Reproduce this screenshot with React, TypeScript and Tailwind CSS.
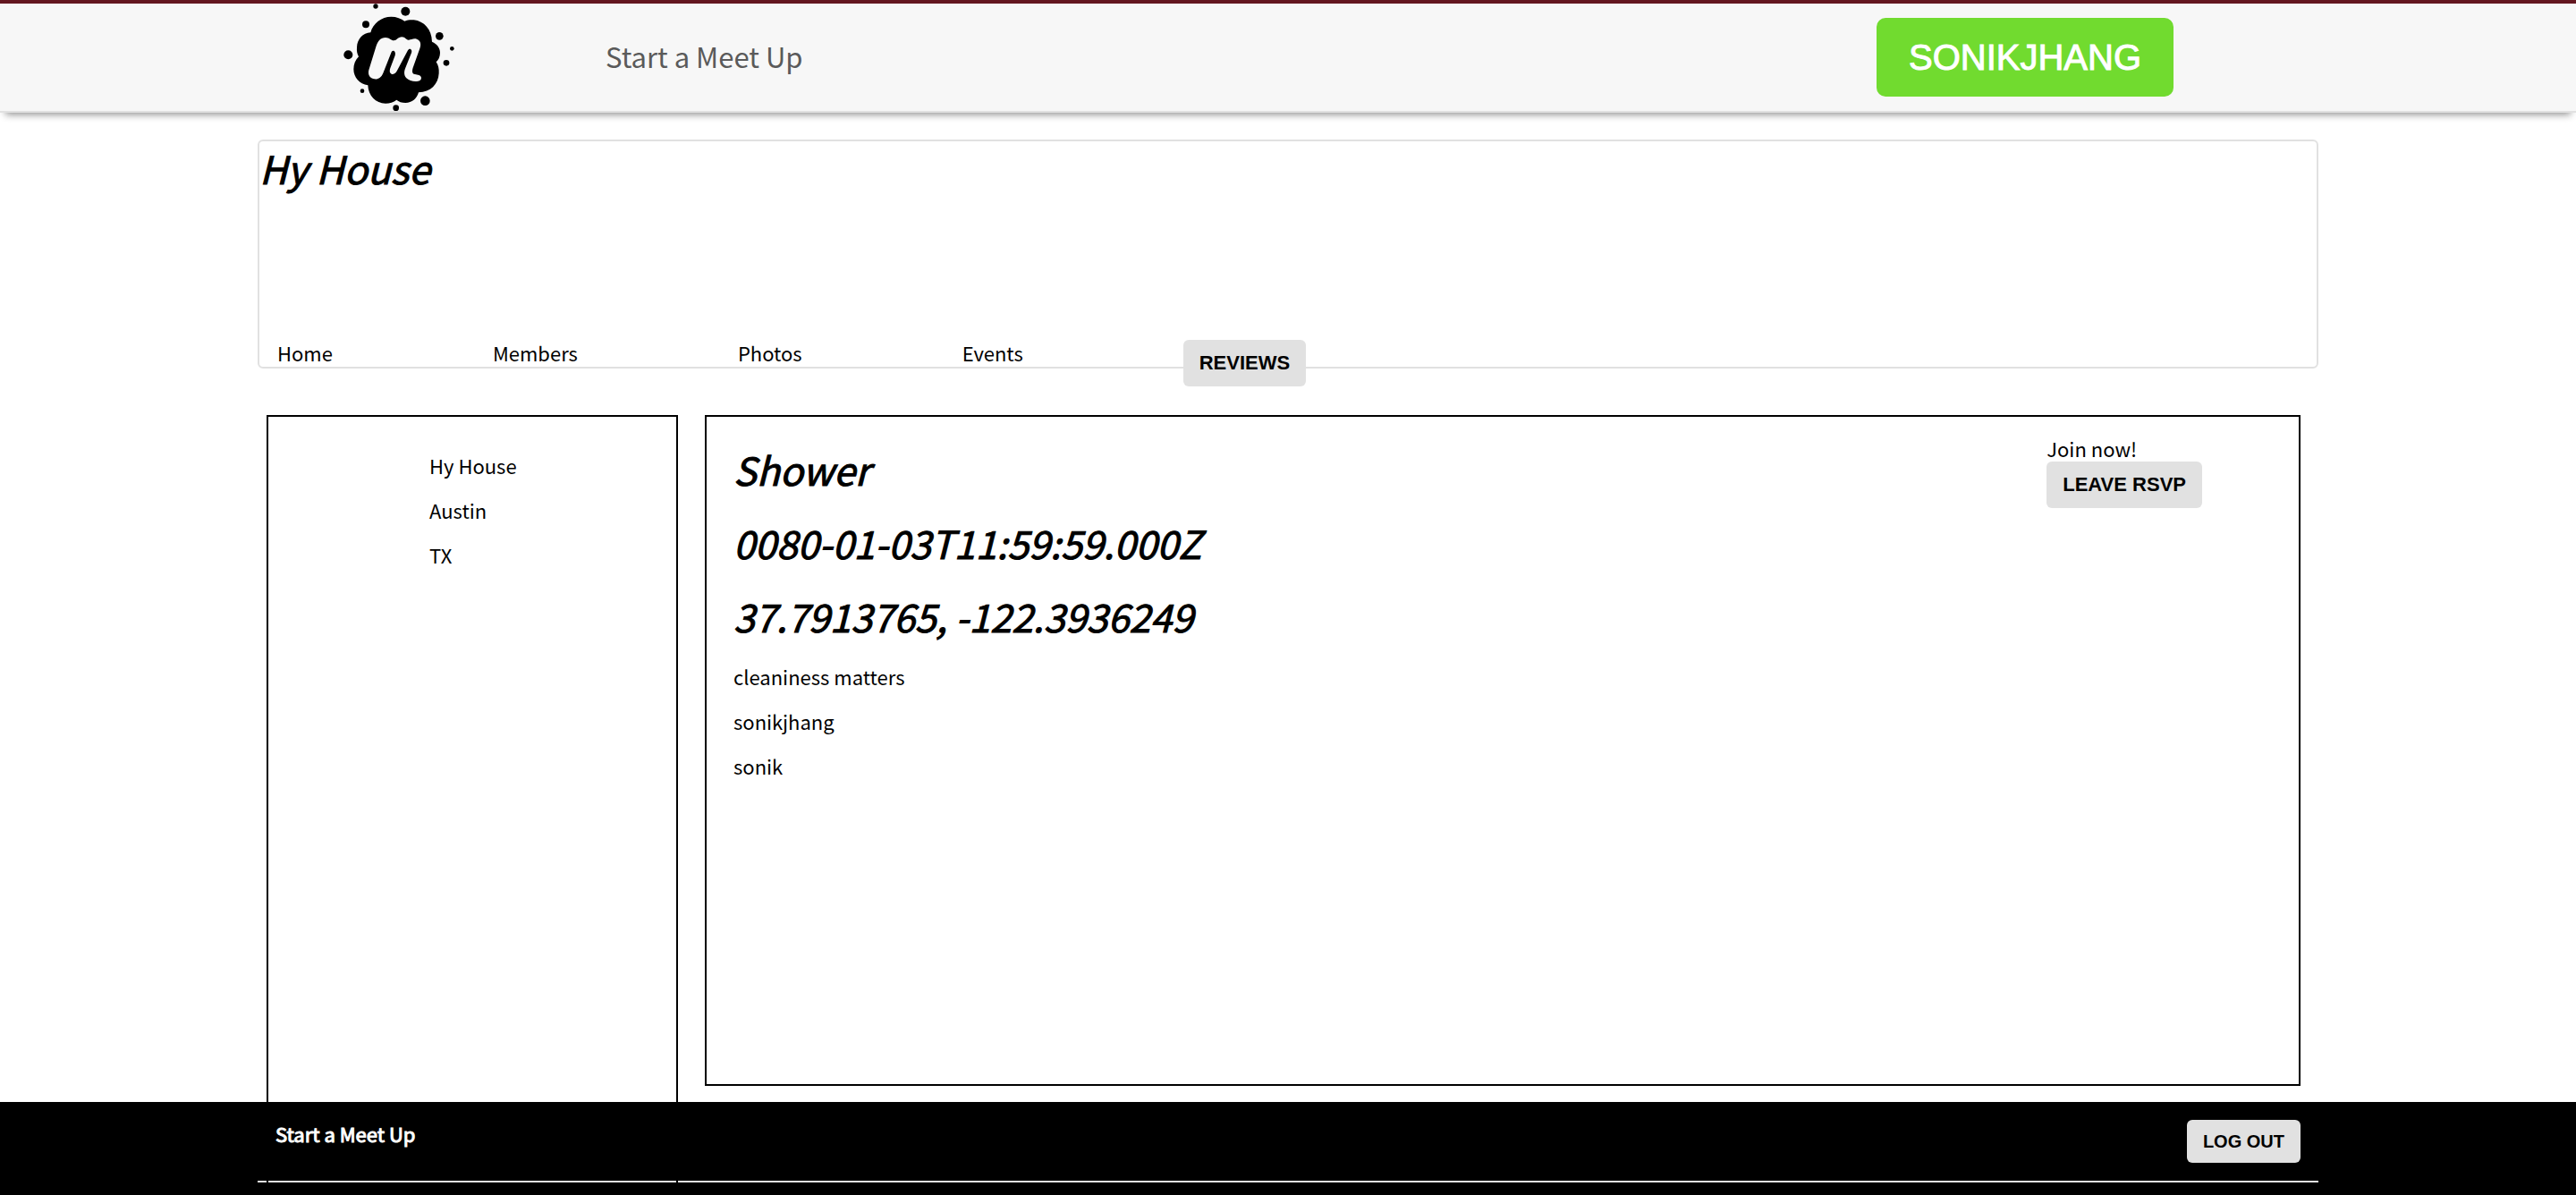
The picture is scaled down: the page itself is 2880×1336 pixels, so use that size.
import type { ReactNode } from 'react';

function Logo() {
  return (
    <svg viewBox="72 9 375 363" className="h-[121px] w-[125px]" role="img" aria-label="Meetup">
      <g fill="#000">
        <path d="M163 106 C170 76 200 53 232 53 C250 53 266 59 277 68 C286 64 298 63 308 64 C342 68 368 95 369 137 C386 144 396 158 396 174 C396 187 391 198 383 205 C390 216 393 228 392 243 C390 280 364 306 324 307 C318 328 302 342 280 342 C268 342 257 338 250 332 C240 340 227 344 213 344 C180 344 155 318 154 283 C126 280 106 257 106 229 C106 212 112 198 123 187 C118 178 116 168 117 156 C118 128 137 108 163 106 Z" />
        <circle cx="180" cy="18" r="8" />
        <circle cx="280" cy="35" r="15" />
        <circle cx="147" cy="79" r="12" />
        <circle cx="394" cy="118" r="13" />
        <circle cx="436" cy="160" r="7" />
        <circle cx="417" cy="208" r="10" />
        <circle cx="88" cy="181" r="15" />
        <circle cx="135" cy="302" r="7" />
        <circle cx="248" cy="359" r="10" />
        <circle cx="346" cy="335" r="16" />
      </g>
      <path
        fill="#f7f7f7"
        d="M181 154 C187 134 196 123 213 123 C227 123 231 133 241 133 C251 133 254 121 268 121 C280 121 282 132 291 131 C299 130 308 124 318 128 C331 133 333 145 328 160 L305 224 C301 237 303 245 312 246 L325 249 C335 252 335 263 328 267 C318 273 293 270 283 259 C274 249 275 236 280 224 L300 174 C304 163 293 156 288 166 L253 232 C248 243 240 248 233 245 C225 241 227 231 230 223 L245 183 C249 168 236 162 232 174 L205 242 C199 257 188 264 175 262 C159 259 153 246 157 232 Z"
      />
    </svg>
  );
}

function GrayButton({ children }: { children: ReactNode }) {
  return (
    <button className="h-[52px] rounded-md bg-[#e1e1e1] px-[18px] font-['Liberation_Sans',Arial,sans-serif] text-[22px] font-bold leading-[30px] text-black">
      {children}
    </button>
  );
}

function Heading({ children }: { children: ReactNode }) {
  return (
    <h2 className="text-[43px] italic leading-[62px] [-webkit-text-stroke:1px_black]">{children}</h2>
  );
}

const tabs = ['Home', 'Members', 'Photos', 'Events'];
const groupInfo = ['Hy House', 'Austin', 'TX'];
const eventInfo = ['cleaniness matters', 'sonikjhang', 'sonik'];

export default function App() {
  return (
    <div className="flex min-h-screen flex-col bg-white font-['Noto_Sans_CJK_SC',sans-serif] text-[22px] leading-[30px] text-black">
      <header className="border-b-2 border-t-4 border-b-[#e1e1e1] border-t-[#641720] bg-[#f7f7f7] shadow-[0_8px_8px_-6px_rgba(0,0,0,0.45)]">
        <div className="mx-auto flex h-[120px] w-4/5 items-center pl-24 pr-[162px]">
          <a href="#home">
            <Logo />
          </a>
          <a href="#start" className="ml-[168px] pb-[2px] text-[31px] leading-[44px] text-[#5a5a5a]">
            Start a Meet Up
          </a>
          <button className="ml-auto h-[88px] rounded-[10px] bg-[#71db2f] px-9 font-['Liberation_Sans',Arial,sans-serif] text-[40px] text-white [-webkit-text-stroke:1px_white]">
            SONIKJHANG
          </button>
        </div>
      </header>

      <div className="mx-auto flex w-4/5 grow flex-col pt-[30px]">
        <section className="mb-[52px] flex h-64 flex-col rounded-md border-2 border-[#e1e1e1]">
          <h1 className="text-[43px] italic leading-[58px] [-webkit-text-stroke:1px_black]">
            Hy House
          </h1>
          <nav className="mt-[164px] flex items-start gap-[179px] pl-5">
            {tabs.map((tab) => (
              <a key={tab} href={`#${tab.toLowerCase()}`} className="leading-7">
                {tab}
              </a>
            ))}
            <GrayButton>REVIEWS</GrayButton>
          </nav>
        </section>

        <div className="flex grow gap-[30px] pl-[10px] pr-5">
          <aside className="flex w-[460px] shrink-0 flex-col gap-5 border-2 border-b-0 border-black pl-[180px] pt-[39px]">
            {groupInfo.map((line) => (
              <p key={line}>{line}</p>
            ))}
          </aside>
          <main className="mb-[18px] flex min-h-[750px] grow justify-between border-2 border-black pl-[30px] pr-[108px]">
            <div className="flex flex-col gap-[22px] pt-[27px]">
              <div className="flex flex-col gap-5">
                <Heading>Shower</Heading>
                <Heading>0080-01-03T11:59:59.000Z</Heading>
                <Heading>37.7913765, -122.3936249</Heading>
              </div>
              <div className="flex flex-col gap-5">
                {eventInfo.map((line) => (
                  <p key={line}>{line}</p>
                ))}
              </div>
            </div>
            <div className="flex flex-col items-start pt-5">
              <p>Join now!</p>
              <GrayButton>LEAVE RSVP</GrayButton>
            </div>
          </main>
        </div>
      </div>

      <footer className="bg-black pb-[14px] pt-5 text-white">
        <div className="mx-auto w-4/5">
          <div className="flex items-start justify-between pl-5 pr-5">
            <a href="#start" className="[-webkit-text-stroke:1px_white]">
              Start a Meet Up
            </a>
            <button className="h-12 rounded-md bg-[#e1e1e1] px-[18px] font-['Liberation_Sans',Arial,sans-serif] text-xl font-bold text-black">
              LOG OUT
            </button>
          </div>
          <div className="mt-5 flex h-[2px] gap-[2px]">
            <div className="w-[10px] shrink-0 bg-[#e1e1e1]" />
            <div className="w-[456px] shrink-0 bg-[#e1e1e1]" />
            <div className="grow bg-[#e1e1e1]" />
          </div>
        </div>
      </footer>
    </div>
  );
}
